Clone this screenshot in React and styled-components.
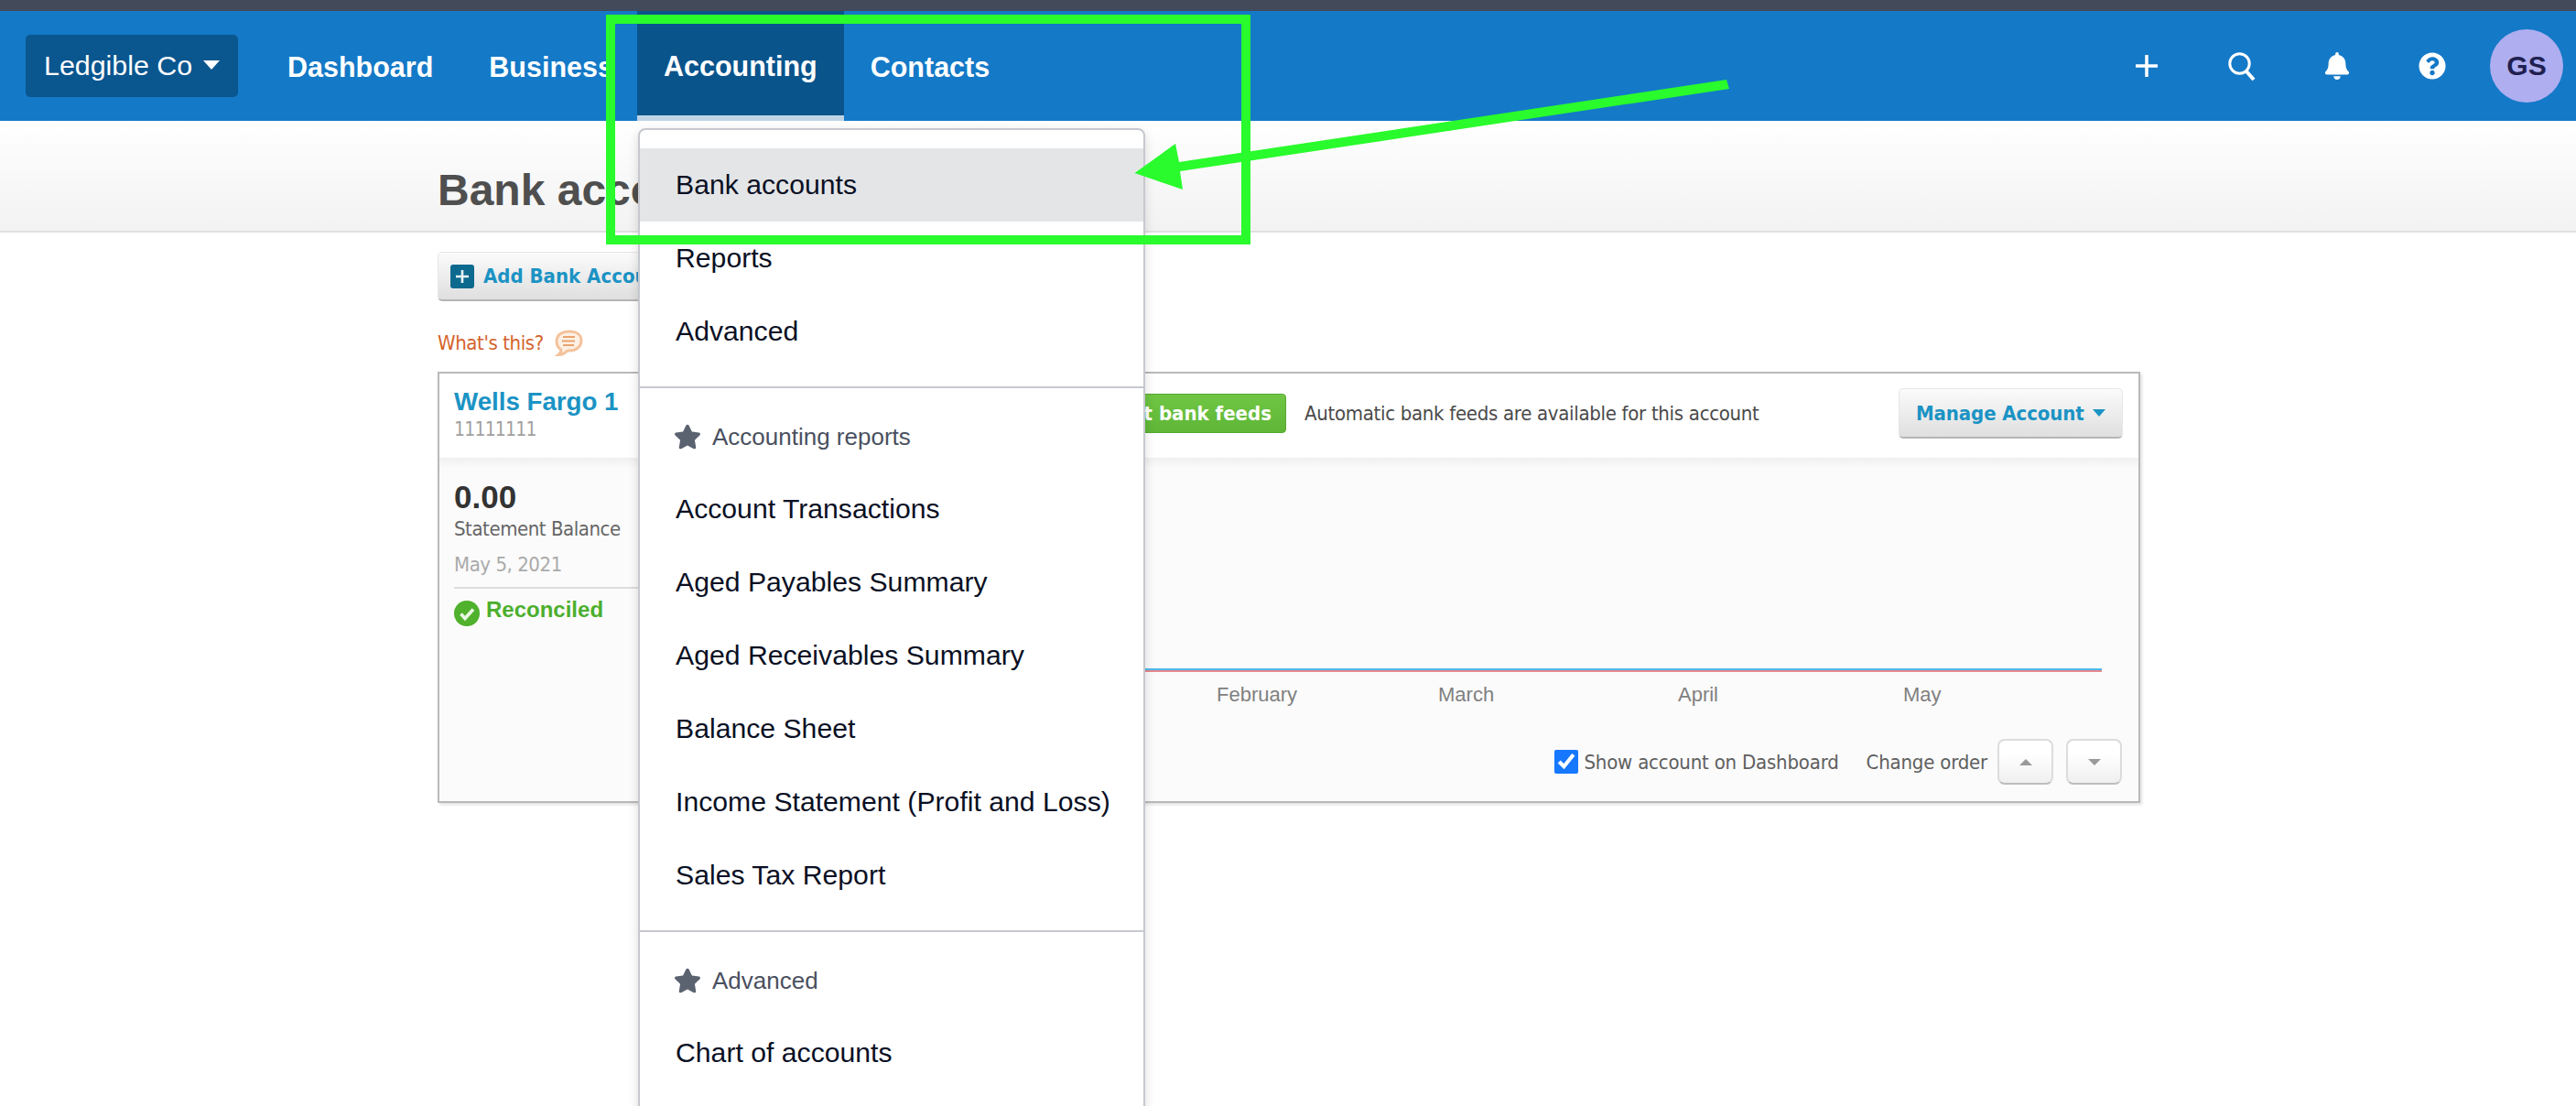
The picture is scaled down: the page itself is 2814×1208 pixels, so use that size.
import React from "react";
import styled, { createGlobalStyle } from "styled-components";
import { FaBell, FaQuestionCircle, FaStar } from "react-icons/fa";

const Global = createGlobalStyle`
  html, body { margin: 0; padding: 0; background: #fff; }
  body { font-family: "Liberation Sans", Arial, sans-serif; }
  * { box-sizing: border-box; }
`;

const TAHOMA = `"DejaVu Sans Condensed", "DejaVu Sans", sans-serif`;
const LINK = "#1b93c4";

const Page = styled.div`
  position: relative;
  width: 2814px;
  height: 1208px;
  overflow: hidden;
  background: #fff;
`;
const TopStrip = styled.div`
  height: 12px;
  background: #434a5a;
`;
const Nav = styled.nav`
  display: flex;
  align-items: center;
  height: 120px;
  padding: 0 14px 0 28px;
  background: #1479c7;
`;
const Brand = styled.div`
  display: flex;
  align-items: center;
  gap: 12px;
  width: 232px;
  height: 68px;
  padding: 0 0 2px 20px;
  border-radius: 5px;
  background: #0a568f;
  color: #fff;
  font-size: 30.4px;
`;
const Caret = styled.span`
  width: 0;
  height: 0;
  border-left: ${(p) => p.$size}px solid transparent;
  border-right: ${(p) => p.$size}px solid transparent;
  border-top: ${(p) => p.$height}px solid ${(p) => p.$color};
`;
const Links = styled.div`
  display: flex;
  align-self: stretch;
  margin-left: 25px;
`;
const NavLink = styled.a`
  display: flex;
  align-items: center;
  padding: 3px 29px 0;
  color: #fff;
  font-size: 30.5px;
  font-weight: 700;
  &:first-child { padding-right: 32px; }
  &:nth-child(2) { padding-right: 26px; }
  ${(p) =>
    p.$active &&
    `background: #0a548c;
     border-bottom: 6px solid #bed4e5;
     padding-top: 6px;`}
`;
const Actions = styled.div`
  display: flex;
  align-items: center;
  margin-left: auto;
`;
const IconSlot = styled.span`
  display: flex;
  align-items: center;
  justify-content: center;
  width: 104px;
  color: #fff;
`;
const Avatar = styled.div`
  display: flex;
  align-items: center;
  justify-content: center;
  width: 80px;
  height: 80px;
  margin-left: 11px;
  border-radius: 50%;
  background: #aeaef0;
  color: #1f2050;
  font-size: 30px;
  font-weight: 700;
`;
const SubHeader = styled.header`
  display: flex;
  align-items: center;
  height: 122px;
  padding: 30px 0 0 478px;
  background: linear-gradient(#fff, #f2f2f2);
  border-bottom: 2px solid #e0e0e0;
`;
const Title = styled.h1`
  margin: 0;
  color: #4f4f4f;
  font-size: 48px;
  font-weight: 700;
`;
const Main = styled.main`
  display: flex;
  flex-direction: column;
  align-items: flex-start;
  width: 2338px;
  padding: 21px 0 0 478px;
`;
const GreyButton = styled.button`
  display: flex;
  align-items: center;
  padding: 0;
  border: 1px solid #e6e6e6;
  border-bottom: 2px solid #b5b5b5;
  border-radius: 5px;
  background: linear-gradient(#fbfbfb, #dfdfdf);
  color: ${LINK};
  font-family: ${TAHOMA};
  font-size: 22px;
  font-weight: 700;
`;
const AddButton = styled(GreyButton)`
  gap: 10px;
  width: 330px;
  height: 54px;
  padding-left: 13px;
`;
const ManageButton = styled(GreyButton)`
  justify-content: space-between;
  width: 245px;
  height: 55px;
  padding: 0 18px;
  letter-spacing: -0.1px;
`;
const Whats = styled.div`
  display: flex;
  align-items: center;
  gap: 12px;
  height: 30px;
  margin-top: 30px;
  color: #d5632a;
  font-family: ${TAHOMA};
  font-size: 22px;
  letter-spacing: -0.4px;
`;
const Card = styled.section`
  display: flex;
  flex-direction: column;
  width: 1860px;
  height: 471px;
  margin-top: 17px;
  border: 2px solid #b9b9b9;
  box-shadow: 2px 2px 3px rgba(0, 0, 0, 0.12);
`;
const CardHead = styled.div`
  display: grid;
  grid-template-columns: 675px 250px 1fr auto;
  align-items: center;
  height: 92px;
  padding: 0 17px 5px 0;
  background: #fff;
`;
const AccountName = styled.div`
  padding-left: 16px;
`;
const AccountTitle = styled.div`
  color: ${LINK};
  font-size: 27.7px;
  font-weight: 700;
  line-height: 32px;
`;
const AccountNo = styled.div`
  margin-top: 2px;
  color: #a0a0a0;
  font-family: ${TAHOMA};
  font-size: 21px;
  line-height: 24px;
  letter-spacing: -0.8px;
`;
const FeedButton = styled.button`
  display: flex;
  align-items: center;
  justify-content: flex-end;
  height: 43px;
  padding: 0 15px 0 0;
  border: 1px solid #57a831;
  border-radius: 4px;
  background: linear-gradient(#70c644, #5fb637);
  color: #fff;
  font-family: ${TAHOMA};
  font-size: 22px;
  font-weight: 700;
`;
const FeedNote = styled.span`
  padding-left: 20px;
  color: #4a4a4a;
  font-family: ${TAHOMA};
  font-size: 22px;
  letter-spacing: -0.3px;
`;
const CardBody = styled.div`
  display: flex;
  flex: 1;
  background: linear-gradient(#f0f0f0, #fbfbfb 12px, #fbfbfb);
`;
const Summary = styled.div`
  display: flex;
  flex-direction: column;
  width: 500px;
  padding: 23px 0 0 16px;
`;
const Amount = styled.div`
  color: #333;
  font-size: 35px;
  font-weight: 700;
  line-height: 40px;
`;
const Caption = styled.div`
  margin-top: ${(p) => p.$gap}px;
  color: ${(p) => p.$color};
  font-family: ${TAHOMA};
  font-size: 22px;
  line-height: 30px;
  letter-spacing: -0.45px;
`;
const Rule = styled.hr`
  width: 100%;
  height: 2px;
  margin: 9px 0 0;
  border: 0;
  background: #ddd;
`;
const Status = styled.div`
  display: flex;
  gap: 7px;
  margin-top: 13px;
  color: #4caf2d;
  font-size: 24px;
  font-weight: 700;
  line-height: 20px;
`;
const Chart = styled.div`
  display: flex;
  flex: 1;
  flex-direction: column;
`;
const ChartSvg = styled.svg`
  display: block;
  font-family: "Liberation Sans", Arial, sans-serif;
  font-size: 22px;
`;
const Controls = styled.div`
  display: flex;
  align-items: center;
  justify-content: flex-end;
  height: 50px;
  margin-top: 17px;
  padding-right: 18px;
  color: #606060;
  font-family: ${TAHOMA};
  font-size: 22px;
  letter-spacing: -0.2px;
`;
const Check = styled.input`
  width: 26px;
  height: 26px;
  margin: 0 6px 0 0;
  accent-color: #1677ff;
`;
const OrderLabel = styled.span`
  margin: 0 11px 0 30px;
`;
const OrderButton = styled.button`
  display: flex;
  align-items: center;
  justify-content: center;
  width: 61px;
  height: 50px;
  margin-left: ${(p) => p.$gap}px;
  padding: 0;
  border: 2px solid #dcdcdc;
  border-bottom-color: #bdbdbd;
  border-radius: 8px;
  background: linear-gradient(#fff 30%, #efefef);
`;
const TriUp = styled.span`
  width: 0;
  height: 0;
  border-left: 7px solid transparent;
  border-right: 7px solid transparent;
  border-bottom: 7px solid #9a9a9a;
`;
const Dropdown = styled.div`
  position: absolute;
  left: 697px;
  top: 140px;
  width: 554px;
  height: 1080px;
  padding-top: 20px;
  background: #fff;
  border: 2px solid #c6c8cf;
  border-radius: 8px 8px 0 0;
  box-shadow: 0 4px 12px rgba(0, 0, 0, 0.14);
`;
const MenuItem = styled.a`
  display: flex;
  align-items: center;
  height: 80px;
  padding-left: 39px;
  background: ${(p) => (p.$hover ? "#e4e5e7" : "transparent")};
  color: #0a1024;
  font-size: 30.2px;
`;
const MenuRule = styled.hr`
  height: 2px;
  margin: 20px 0;
  border: 0;
  background: #c6c8cf;
`;
const MenuHeading = styled.div`
  display: flex;
  align-items: center;
  gap: 12px;
  height: 68px;
  margin-bottom: 4px;
  padding: 0 0 2px 37px;
  color: #4a5060;
  font-size: 26px;
`;
const GreenBox = styled.div`
  position: absolute;
  left: 662px;
  top: 16px;
  width: 704px;
  height: 251px;
  border: 10px solid #29fb2c;
`;
const Arrow = styled.svg`
  position: absolute;
  left: 1230px;
  top: 80px;
`;

const Plus = () => (
  <svg width="24" height="24" viewBox="0 0 24 24">
    <path d="M12 0v24M0 12h24" stroke="#fff" strokeWidth="3.5" />
  </svg>
);
const Search = () => (
  <svg width="30" height="31" viewBox="0 0 30 31" fill="none" stroke="#fff">
    <circle cx="12.5" cy="12.5" r="10.7" strokeWidth="3" />
    <path d="M20 21l8 9" strokeWidth="4" />
  </svg>
);
const AddIcon = () => (
  <svg width="26" height="26" viewBox="0 0 26 26">
    <rect width="26" height="26" rx="3" fill="#0d6a8f" />
    <path d="M13 6v14M6 13h14" stroke="#e8f4f8" strokeWidth="2.6" />
  </svg>
);
const Bubble = () => (
  <svg width="31" height="29" viewBox="0 0 31 29" fill="none">
    <path
      d="M16 2c7 0 13 3 13 10s-6 11-13 11c-1 0-2 0-3 .5-2 2.500-5 4-9 4 2-1.500 3-3.500 3-5.500-3-2-5-5-5-9C2 5 9 2 16 2z"
      fill="#fdf0e4"
      stroke="#f3c29c"
      strokeWidth="3"
    />
    <path d="M9 8h13M8 12.500h14M9 17h12" stroke="#eaa36e" strokeWidth="2" />
  </svg>
);
const Tick = () => (
  <svg width="28" height="28" viewBox="0 0 28 28" style={{ flex: "none" }}>
    <circle cx="14" cy="14" r="14" fill="#4fb12c" />
    <path d="M7.500 14.500l4.500 5 9-10" fill="none" stroke="#e9f7e2" strokeWidth="3.600" />
  </svg>
);

const months = [
  ["January", 1070],
  ["February", 1331],
  ["March", 1573],
  ["April", 1835],
  ["May", 2081],
];

export default function App() {
  return (
    <Page>
      <Global />
      <TopStrip />
      <Nav>
        <Brand>
          Ledgible Co
          <Caret $size={9} $height={10} $color="#fff" />
        </Brand>
        <Links>
          <NavLink>Dashboard</NavLink>
          <NavLink>Business</NavLink>
          <NavLink $active>Accounting</NavLink>
          <NavLink>Contacts</NavLink>
        </Links>
        <Actions>
          <IconSlot><Plus /></IconSlot>
          <IconSlot><Search /></IconSlot>
          <IconSlot><FaBell size={30} /></IconSlot>
          <IconSlot><FaQuestionCircle size={30} /></IconSlot>
          <Avatar>GS</Avatar>
        </Actions>
      </Nav>
      <SubHeader>
        <Title>Bank accounts</Title>
      </SubHeader>
      <Main>
        <AddButton>
          <AddIcon />
          Add Bank Account
        </AddButton>
        <Whats>
          What's this?
          <Bubble />
        </Whats>
        <Card>
          <CardHead>
            <AccountName>
              <AccountTitle>Wells Fargo 1</AccountTitle>
              <AccountNo>11111111</AccountNo>
            </AccountName>
            <FeedButton>Get bank feeds</FeedButton>
            <FeedNote>Automatic bank feeds are available for this account</FeedNote>
            <ManageButton>
              Manage Account
              <Caret $size={7} $height={8} $color={LINK} />
            </ManageButton>
          </CardHead>
          <CardBody>
            <Summary>
              <Amount>0.00</Amount>
              <Caption $gap={0} $color="#666">Statement Balance</Caption>
              <Caption $gap={9} $color="#aaa">May 5, 2021</Caption>
              <Rule />
              <Status>
                <Tick />
                Reconciled
              </Status>
            </Summary>
            <Chart>
              <ChartSvg width="1358" height="290" viewBox="980 500 1358 290">
                <path d="M980 731H2298" stroke="#4fb8e8" strokeWidth="2" />
                <path d="M980 733H2298" stroke="#e58a8f" strokeWidth="2" />
                {months.map(([name, x]) => (
                  <text key={name} x={x} y="766" fill="#808080">
                    {name}
                  </text>
                ))}
              </ChartSvg>
              <Controls>
                <Check type="checkbox" checked readOnly />
                Show account on Dashboard
                <OrderLabel>Change order</OrderLabel>
                <OrderButton><TriUp /></OrderButton>
                <OrderButton $gap={14}>
                  <Caret $size={7} $height={7} $color="#9a9a9a" />
                </OrderButton>
              </Controls>
            </Chart>
          </CardBody>
        </Card>
      </Main>
      <Dropdown>
        <MenuItem $hover>Bank accounts</MenuItem>
        <MenuItem>Reports</MenuItem>
        <MenuItem>Advanced</MenuItem>
        <MenuRule />
        <MenuHeading>
          <FaStar size={30} color="#5c6370" />
          Accounting reports
        </MenuHeading>
        <MenuItem>Account Transactions</MenuItem>
        <MenuItem>Aged Payables Summary</MenuItem>
        <MenuItem>Aged Receivables Summary</MenuItem>
        <MenuItem>Balance Sheet</MenuItem>
        <MenuItem>Income Statement (Profit and Loss)</MenuItem>
        <MenuItem>Sales Tax Report</MenuItem>
        <MenuRule />
        <MenuHeading>
          <FaStar size={30} color="#5c6370" />
          Advanced
        </MenuHeading>
        <MenuItem>Chart of accounts</MenuItem>
      </Dropdown>
      <GreenBox />
      <Arrow width="670" height="140" viewBox="1230 80 670 140">
        <polygon
          points="1886,87 1889,97 1289,187 1292,207 1239.5,189 1284,157 1288,177"
          fill="#29fb2c"
        />
      </Arrow>
    </Page>
  );
}
